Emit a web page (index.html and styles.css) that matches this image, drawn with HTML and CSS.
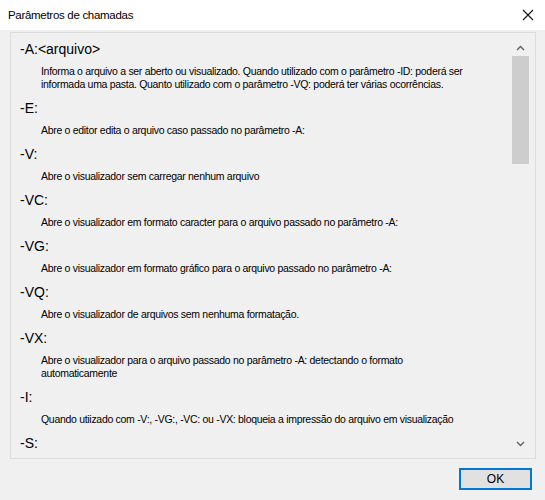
FILE: index.html
```html
<!DOCTYPE html>
<html lang="pt">
<head>
<meta charset="utf-8">
<title>Parâmetros de chamadas</title>
<link rel="stylesheet" href="styles.css">
</head>
<body>
<div class="window">
  <div class="titlebar">
    <span class="title">Parâmetros de chamadas</span>
    <span class="close">
      <svg width="12" height="12" viewBox="0 0 12 12"><path d="M1 1L11 11M11 1L1 11" stroke="#111" stroke-width="1.1" fill="none"/></svg>
    </span>
  </div>
  <div class="body">
    <div class="panel">
      <div class="inner">
        <div class="content">
          <div class="param">
            <div class="name">-A:&lt;arquivo&gt;</div>
            <div class="desc">Informa o arquivo a ser aberto ou visualizado. Quando utilizado com o parâmetro -ID: poderá ser<br>informada uma pasta. Quanto utilizado com o parâmetro -VQ: poderá ter várias ocorrências.</div>
          </div>
          <div class="param">
            <div class="name">-E:</div>
            <div class="desc">Abre o editor edita o arquivo caso passado no parâmetro -A:</div>
          </div>
          <div class="param">
            <div class="name">-V:</div>
            <div class="desc">Abre o visualizador sem carregar nenhum arquivo</div>
          </div>
          <div class="param">
            <div class="name">-VC:</div>
            <div class="desc">Abre o visualizador em formato caracter para o arquivo passado no parâmetro -A:</div>
          </div>
          <div class="param">
            <div class="name">-VG:</div>
            <div class="desc">Abre o visualizador em formato gráfico para o arquivo passado no parâmetro -A:</div>
          </div>
          <div class="param">
            <div class="name">-VQ:</div>
            <div class="desc">Abre o visualizador de arquivos sem nenhuma formatação.</div>
          </div>
          <div class="param">
            <div class="name">-VX:</div>
            <div class="desc">Abre o visualizador para o arquivo passado no parâmetro -A: detectando o formato<br>automaticamente</div>
          </div>
          <div class="param">
            <div class="name">-I:</div>
            <div class="desc">Quando utiizado com -V:, -VG:, -VC: ou -VX: bloqueia a impressão do arquivo em visualização</div>
          </div>
          <div class="param">
            <div class="name">-S:</div>
          </div>
        </div>
        <div class="scrollbar">
          <div class="arrow">
            <svg width="9" height="6" viewBox="0 0 9 6"><path d="M1 5L4.5 1.5L8 5" stroke="#606060" stroke-width="1.4" fill="none"/></svg>
          </div>
          <div class="track"><div class="thumb"></div></div>
          <div class="arrow">
            <svg width="9" height="6" viewBox="0 0 9 6"><path d="M1 1L4.5 4.5L8 1" stroke="#606060" stroke-width="1.4" fill="none"/></svg>
          </div>
        </div>
      </div>
    </div>
    <div class="footer">
      <button class="ok">OK</button>
    </div>
  </div>
</div>
</body>
</html>
```
FILE: styles.css
```css
html, body {
  margin: 0;
  padding: 0;
}
body {
  width: 545px;
  height: 500px;
  overflow: hidden;
  background: #f0f0f0;
  font-family: "Liberation Sans", Arial, sans-serif;
  color: #000;
}
.window {
  width: 545px;
  height: 500px;
  display: flex;
  flex-direction: column;
}
.titlebar {
  height: 30px;
  background: #fff;
  display: flex;
  align-items: center;
  justify-content: space-between;
  padding: 0 11px 0 8px;
  flex: none;
}
.title {
  font-size: 11.5px;
  letter-spacing: -0.3px;
  color: #000;
}
.close {
  display: flex;
  align-items: center;
}
.body {
  flex: 1;
  display: flex;
  flex-direction: column;
}
.panel {
  box-sizing: border-box;
  margin: 2px 9px 0 10px;
  height: 427px;
  border: 1px solid #dcdcdc;
  padding: 6px 6px 6px 0;
  display: flex;
  flex: none;
}
.inner {
  flex: 1;
  display: flex;
  overflow: hidden;
}
.content {
  flex: 1;
  padding: 2px 0 0 9px;
  overflow: hidden;
}
.param {
  margin-bottom: 9px;
}
.name {
  font-size: 14px;
  line-height: 16px;
  margin-bottom: 8px;
}
.desc {
  font-size: 10.5px;
  letter-spacing: -0.3px;
  line-height: 13px;
  padding-left: 21px;
  white-space: nowrap;
}
.scrollbar {
  width: 17px;
  display: flex;
  flex-direction: column;
  flex: none;
}
.arrow {
  height: 17px;
  display: flex;
  align-items: center;
  justify-content: center;
  flex: none;
}
.track {
  flex: 1;
}
.thumb {
  height: 108px;
  background: #cdcdcd;
}
.footer {
  display: flex;
  justify-content: flex-end;
  padding: 9px 13px 0 0;
}
.ok {
  width: 73px;
  height: 22px;
  border: 2px solid #0078d7;
  background: #e1e1e1;
  font-family: "Liberation Sans", Arial, sans-serif;
  font-size: 12px;
  color: #000;
  padding: 0;
}
```
